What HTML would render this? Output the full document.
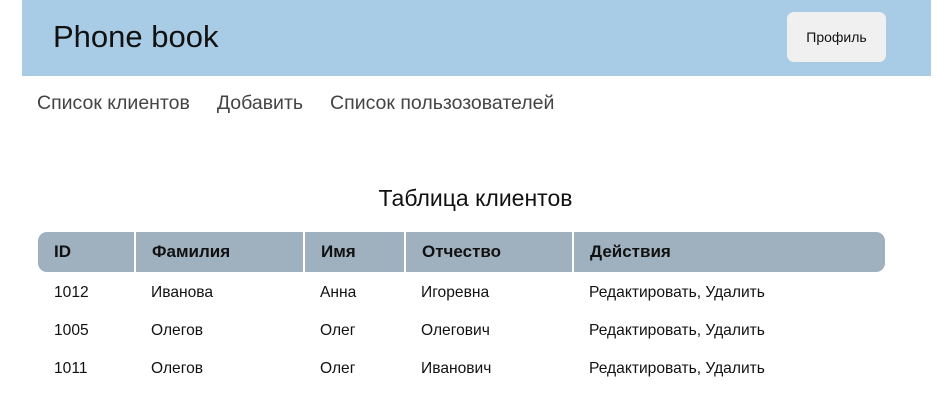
<!DOCTYPE html>
<html><head><meta charset="utf-8"><style>
body{margin:0;background:#fff;font-family:"Liberation Sans",Arial,sans-serif;width:951px;height:410px;overflow:hidden;position:relative}
.hdr{position:absolute;left:22px;top:0;width:909px;height:76px;background:#a8cce6}
.hdr h1{position:absolute;left:31px;top:19px;margin:0;font-weight:normal;font-size:31px;color:#111}
.btn{position:absolute;left:765px;top:12px;width:99px;height:50px;background:#f0f0f0;border-radius:7px;font-size:14px;line-height:50px;text-align:center;color:#111}
.nav{position:absolute;top:92px;left:37px;font-size:19.5px;color:#444;white-space:nowrap}
.nav span{margin-right:27px}
.title{position:absolute;top:185px;left:0;width:951px;text-align:center;font-size:23px;color:#111}
table{position:absolute;left:38px;top:232px;width:847px;border-collapse:collapse;font-size:15.6px;color:#111}
th{background:#9fb1bf;height:40px;text-align:left;padding:0 0 0 16px;font-size:17px;border-left:2px solid #fff}
th:first-child{border-left:none;border-radius:9px 0 0 9px}
th:last-child{border-radius:0 9px 9px 0}
td{height:34px;padding:4px 0 0 16px;vertical-align:middle}
</style></head><body>
<div class="hdr"><h1>Phone book</h1><div class="btn">Профиль</div></div>
<div class="nav"><span>Список клиентов</span><span>Добавить</span><span>Список пользозователей</span></div>
<div class="title">Таблица клиентов</div>
<table>
<colgroup><col style="width:97px"><col style="width:169px"><col style="width:101px"><col style="width:168px"><col></colgroup>
<tr><th>ID</th><th>Фамилия</th><th>Имя</th><th>Отчество</th><th>Действия</th></tr>
<tr><td>1012</td><td>Иванова</td><td>Анна</td><td>Игоревна</td><td>Редактировать, Удалить</td></tr>
<tr><td>1005</td><td>Олегов</td><td>Олег</td><td>Олегович</td><td>Редактировать, Удалить</td></tr>
<tr><td>1011</td><td>Олегов</td><td>Олег</td><td>Иванович</td><td>Редактировать, Удалить</td></tr>
</table>
</body></html>
